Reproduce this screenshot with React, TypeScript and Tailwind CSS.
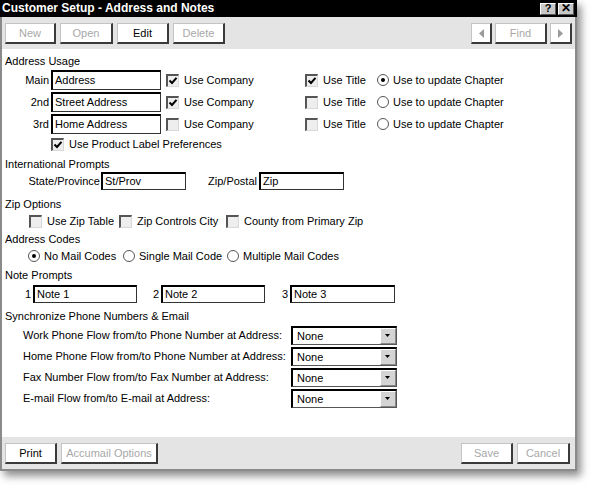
import React from 'react';

const font = "font-['Tahoma','Liberation_Sans',sans-serif]";

const Btn = ({ label, w, disabled }: { label: React.ReactNode; w: string; disabled?: boolean }) => (
  <div
    className={`${w} h-[21px] flex items-center justify-center bg-white border-t border-l border-[#c4c4c4] border-r-2 border-b-2 border-r-[#3a3a3a] border-b-[#3a3a3a] ${
      disabled ? 'text-[#a8a8a8]' : 'text-black'
    }`}
  >
    {label}
  </div>
);

const Check = ({ label, checked }: { label: string; checked?: boolean }) => (
  <span className="flex items-center gap-[5px] whitespace-nowrap">
    <span className="w-[13px] h-[13px] shrink-0 bg-[#eeeeee] border-t-2 border-l-2 border-t-[#555] border-l-[#555] border-b border-r border-[#d8d8d8] flex items-center justify-center">
      {checked && (
        <svg width="10" height="10" viewBox="0 0 10 10">
          <path d="M1.5 4.5 L4 7 L8.5 1.8" fill="none" stroke="#000" strokeWidth="2" />
        </svg>
      )}
    </span>
    {label}
  </span>
);

const Radio = ({ label, on }: { label: string; on?: boolean }) => (
  <span className="flex items-center gap-[4px] whitespace-nowrap">
    <span className="w-[12px] h-[12px] shrink-0 rounded-full bg-white border border-[#555] flex items-center justify-center">
      {on && <span className="w-[4px] h-[4px] rounded-full bg-black" />}
    </span>
    {label}
  </span>
);

const Field = ({ value, w, h = 'h-[20px]' }: { value: string; w: string; h?: string }) => (
  <div
    className={`${w} ${h} bg-white border-t-2 border-l-2 border-t-black border-l-black border-b border-r border-b-[#333] border-r-[#333] pl-[2px] flex items-center`}
  >
    {value}
  </div>
);

const Select = () => (
  <div className="w-[106px] h-[19px] bg-white border-t-2 border-l-2 border-t-black border-l-black border-b border-r border-[#555] flex items-center">
    <span className="flex-1 pl-[4px]">None</span>
    <span className="w-[16px] h-full bg-[#d4d4d4] border-l border-t border-white border-r border-b border-r-[#888] border-b-[#888] flex items-center justify-center">
      <svg width="6" height="4" viewBox="0 0 6 4">
        <path d="M0 0 H5 L2.5 3 Z" fill="#000" />
      </svg>
    </span>
  </div>
);

export default function App() {
  const phoneRows = [
    'Work Phone Flow from/to Phone Number at Address:',
    'Home Phone Flow from/to Phone Number at Address:',
    'Fax Number Flow from/to Fax Number at Address:',
    'E-mail Flow from/to E-mail at Address:',
  ];
  const addr = [
    { l: 'Main', v: 'Address', co: true, ti: true, ch: true },
    { l: '2nd', v: 'Street Address', co: true, ti: false, ch: false },
    { l: '3rd', v: 'Home Address', co: false, ti: false, ch: false },
  ];

  return (
    <div className={`w-[593px] h-[489px] bg-white text-[11px] leading-[13px] text-black ${font}`}>
      <div className="w-[577px] h-[471px] flex flex-col shadow-[4px_5px_8px_rgba(0,0,0,0.45)]">
        {/* Title bar */}
        <div className="h-[17px] bg-black flex items-center justify-between pl-[2px] pr-[3px]">
          <span className="text-white font-bold text-[12px] leading-[17px]">Customer Setup - Address and Notes</span>
          <div className="flex gap-[2px]">
            <span className="w-[16px] h-[12px] bg-[#c8c8c8] border-t border-l border-white border-r border-b border-r-[#555] border-b-[#555] flex items-center justify-center font-bold text-[11px]">?</span>
            <span className="w-[16px] h-[12px] bg-[#c8c8c8] border-t border-l border-white border-r border-b border-r-[#555] border-b-[#555] flex items-center justify-center font-bold text-[12px]">✕</span>
          </div>
        </div>

        <div className="flex-1 flex flex-col border-l-2 border-r-2 border-b-2 border-[#8a8a8a]">
          {/* Toolbar */}
          <div className="h-[32px] bg-[#e4e4e4] flex justify-between pt-[6px] pl-[3px] pr-[3px]">
            <div className="flex gap-[4px]">
              <Btn label="New" w="w-[51px]" disabled />
              <Btn label="Open" w="w-[53px]" disabled />
              <Btn label="Edit" w="w-[52px]" />
              <Btn label="Delete" w="w-[52px]" disabled />
            </div>
            <div className="flex gap-[3px]">
              <Btn w="w-[21px]" disabled label={<svg width="5" height="9" viewBox="0 0 5 9"><path d="M5 0 V9 L0 4.5 Z" fill="#9a9a9a" /></svg>} />
              <Btn label="Find" w="w-[52px]" disabled />
              <Btn w="w-[22px]" disabled label={<svg width="5" height="9" viewBox="0 0 5 9"><path d="M0 0 V9 L5 4.5 Z" fill="#9a9a9a" /></svg>} />
            </div>
          </div>

          {/* Content */}
          <div className="flex-1 bg-white flex flex-col">
            <div className="mt-[6px] h-[13px] pl-[3px]">Address Usage</div>
            <div className="mt-[2px] flex flex-col gap-[2px]">
              {addr.map((r) => (
                <div key={r.l} className="h-[20px] flex items-center">
                  <span className="w-[49px] text-right pr-[2px]">{r.l}</span>
                  <Field value={r.v} w="w-[110px]" />
                  <span className="w-[144px] pl-[5px]"><Check label="Use Company" checked={r.co} /></span>
                  <span className="w-[72px]"><Check label="Use Title" checked={r.ti} /></span>
                  <Radio label="Use to update Chapter" on={r.ch} />
                </div>
              ))}
            </div>
            <div className="mt-[2px] h-[17px] flex items-center pl-[49px]">
              <Check label="Use Product Label Preferences" checked />
            </div>

            <div className="mt-[5px] h-[13px] pl-[3px]">International Prompts</div>
            <div className="mt-[1px] h-[18px] flex items-center">
              <span className="w-[98px] text-right">State/Province</span>
              <span className="ml-[1px]"><Field value="St/Prov" w="w-[85px]" h="h-[18px]" /></span>
              <span className="w-[71px] text-right">Zip/Postal</span>
              <span className="ml-[2px]"><Field value="Zip" w="w-[85px]" h="h-[18px]" /></span>
            </div>

            <div className="mt-[8px] h-[13px] pl-[3px]">Zip Options</div>
            <div className="mt-[3px] h-[15px] flex items-center pl-[27px]">
              <span className="w-[90px]"><Check label="Use Zip Table" /></span>
              <span className="w-[107px]"><Check label="Zip Controls City" /></span>
              <Check label="County from Primary Zip" />
            </div>

            <div className="mt-[4px] h-[13px] pl-[3px]">Address Codes</div>
            <div className="mt-[2px] h-[16px] flex items-center pl-[26px]">
              <span className="w-[95px]"><Radio label="No Mail Codes" on /></span>
              <span className="w-[104px]"><Radio label="Single Mail Code" /></span>
              <Radio label="Multiple Mail Codes" />
            </div>

            <div className="mt-[5px] h-[13px] pl-[3px]">Note Prompts</div>
            <div className="mt-[3px] h-[18px] flex items-center">
              <span className="w-[29px] text-right">1</span>
              <span className="ml-[2px]"><Field value="Note 1" w="w-[104px]" h="h-[18px]" /></span>
              <span className="w-[22px] text-right">2</span>
              <span className="ml-[2px]"><Field value="Note 2" w="w-[104px]" h="h-[18px]" /></span>
              <span className="w-[23px] text-right">3</span>
              <span className="ml-[2px]"><Field value="Note 3" w="w-[105px]" h="h-[18px]" /></span>
            </div>

            <div className="mt-[7px] h-[13px] pl-[3px]">Synchronize Phone Numbers &amp; Email</div>
            <div className="mt-[3px] flex flex-col gap-[2px]">
              {phoneRows.map((p) => (
                <div key={p} className="h-[19px] flex items-center">
                  <span className="w-[289px] pl-[21px]">{p}</span>
                  <Select />
                </div>
              ))}
            </div>
          </div>

          {/* Footer */}
          <div className="h-[32px] bg-[#e4e4e4] flex justify-between pt-[6px] pl-[3px] pr-[5px]">
            <div className="flex gap-[4px]">
              <Btn label="Print" w="w-[52px]" />
              <Btn label="Accumail Options" w="w-[97px]" disabled />
            </div>
            <div className="flex gap-[4px]">
              <Btn label="Save" w="w-[52px]" disabled />
              <Btn label="Cancel" w="w-[53px]" disabled />
            </div>
          </div>
        </div>
      </div>
    </div>
  );
}
